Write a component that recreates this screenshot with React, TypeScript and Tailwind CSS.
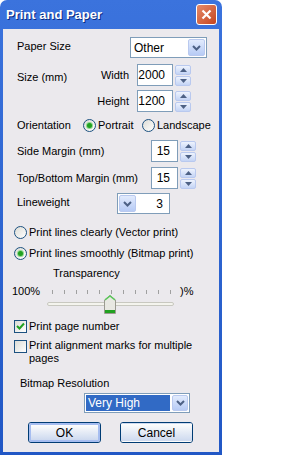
import React from 'react';

const font = { fontFamily: '"Liberation Sans", Arial, sans-serif' };

function Arrow({ up }: { up?: boolean }) {
  return (
    <svg width="7" height="4" viewBox="0 0 7 4">
      <path d={up ? 'M0 4 L3.5 0 L7 4 Z' : 'M0 0 L3.5 4 L7 0 Z'} fill="#4d6185" />
    </svg>
  );
}

function Chevron() {
  return (
    <svg width="9" height="6" viewBox="0 0 9 6">
      <path d="M1 1 L4.5 4.5 L8 1" stroke="#4d6185" strokeWidth="2" fill="none" />
    </svg>
  );
}

function DropButton({ className = '' }: { className?: string }) {
  return (
    <div className={`flex items-center justify-center rounded-[2px] border border-[#b9c9ef] bg-gradient-to-b from-[#e2ebfd] to-[#b7cbf5] ${className}`}>
      <Chevron />
    </div>
  );
}

function Spin({ value, w }: { value: string; w: string }) {
  return (
    <div className="flex items-center gap-[2px]">
      <div className={`${w} h-[22px] border border-[#7f9db9] bg-white flex items-center justify-end pr-[7px] text-[12px] text-black`}>
        {value}
      </div>
      <div className="flex flex-col gap-[1px]">
        <div className="w-[16px] h-[10px] rounded-[2px] border border-[#b9c9ef] bg-gradient-to-b from-[#eef3fd] to-[#c4d4f5] flex items-center justify-center">
          <Arrow up />
        </div>
        <div className="w-[16px] h-[10px] rounded-[2px] border border-[#b9c9ef] bg-gradient-to-b from-[#eef3fd] to-[#c4d4f5] flex items-center justify-center">
          <Arrow />
        </div>
      </div>
    </div>
  );
}

function Radio({ on }: { on?: boolean }) {
  return (
    <div className="w-[13px] h-[13px] rounded-full border border-[#1c5180] bg-gradient-to-br from-[#dcdcd6] to-white flex items-center justify-center shrink-0">
      {on && <div className="w-[5px] h-[5px] rounded-full bg-[#21a121] shadow-[0_0_0_1px_#8fd88f]" />}
    </div>
  );
}

function Check({ on }: { on?: boolean }) {
  return (
    <div className="w-[13px] h-[13px] border border-[#1c5180] bg-gradient-to-br from-[#dcdcd6] to-white flex items-center justify-center shrink-0">
      {on && (
        <svg width="9" height="9" viewBox="0 0 9 9">
          <path d="M1 4 L3.5 6.5 L8 1.5" stroke="#21a121" strokeWidth="2" fill="none" />
        </svg>
      )}
    </div>
  );
}

function Button({ label, primary }: { label: string; primary?: boolean }) {
  return (
    <div className="w-[73px] h-[21px] rounded-[3px] border border-[#003c74] bg-gradient-to-b from-white via-[#f0f0ea] to-[#d6d0c5] p-0">
      <div className={`w-full h-full rounded-[2px] flex items-center justify-center text-[12px] text-black ${primary ? 'border-2 border-[#a6bdf0]' : 'border border-transparent'} bg-gradient-to-b from-[#fdfdfc] to-[#cdd9ef]`}>
        {label}
      </div>
    </div>
  );
}

function Slider() {
  const ticks = Array.from({ length: 11 }, (_, i) => i);
  return (
    <div className="flex flex-col">
      <div className="flex items-center h-[14px] mt-[4px]">
        <span className="w-[38px] pl-[9px]">100%</span>
        <div className="flex gap-[10.8px] ml-[11px] mt-[1px]">
          {ticks.map((t) => (
            <div key={t} className="w-px h-[4px] bg-[#a0a0a0]" />
          ))}
        </div>
        <span className="ml-[9px]">)%</span>
      </div>
      <div className="relative h-[20px] ml-[44px] w-[127px] -mt-[3px]">
        <div className="absolute left-0 right-0 top-[7px] h-[4px] rounded-[2px] border border-[#c8c8c0] bg-[#f4f4ee]" />
        <svg className="absolute left-[57px] top-0" width="12" height="19" viewBox="0 0 12 19">
          <path d="M0.5 5 L6 0.5 L11.5 5 L11.5 18.5 L0.5 18.5 Z" fill="#e8e8e2" stroke="#9a9a90" />
          <path d="M1 5 L6 1 L11 5" stroke="#5ac85a" strokeWidth="1.5" fill="none" />
          <rect x="1" y="15" width="10" height="3" fill="#21a121" />
        </svg>
      </div>
    </div>
  );
}

export default function App() {
  return (
    <div className="w-[295px] h-[455px] bg-white" style={font}>
      <div className="w-[222px] h-[455px] flex flex-col rounded-t-[7px] bg-gradient-to-b from-[#3b73dd] to-[#2157c5]">
        {/* title bar */}
        <div className="h-[29px] flex items-center justify-between pl-[6px] pr-[5px]">
          <span className="text-white font-bold text-[13px] [text-shadow:1px_1px_0_#0a2a80]">Print and Paper</span>
          <div className="w-[21px] h-[21px] rounded-[3px] border border-white bg-gradient-to-br from-[#e48a68] to-[#c5431c] flex items-center justify-center">
            <svg width="11" height="11" viewBox="0 0 11 11">
              <path d="M1.5 1.5 L9.5 9.5 M9.5 1.5 L1.5 9.5" stroke="white" strokeWidth="2.2" />
            </svg>
          </div>
        </div>
        {/* body */}
        <div className="flex-1 mx-[3px] mb-[3px] bg-[#ebe9ed] text-[11px] text-black flex flex-col">
          <div className="flex items-center justify-between h-[21px] mt-[8px] pl-[14px] pr-[12px]">
            <span className="-mt-[3px]">Paper Size</span>
            <div className="w-[77px] h-[21px] border border-[#7f9db9] bg-white flex items-center justify-between pl-[3px] pr-[1px] text-[12px]">
              <span>Other</span>
              <DropButton className="w-[17px] h-[17px]" />
            </div>
          </div>
          <div className="flex mt-[6px]">
            <span className="pl-[14px] w-[90px] self-start mt-[5px]">Size (mm)</span>
            <div className="flex flex-col gap-[4px]">
              <div className="flex items-center">
                <span className="w-[44px] text-right pr-[8px]">Width</span>
                <Spin value="2000" w="w-[36px]" />
              </div>
              <div className="flex items-center">
                <span className="w-[44px] text-right pr-[8px]">Height</span>
                <Spin value="1200" w="w-[36px]" />
              </div>
            </div>
          </div>
          <div className="flex items-center h-[16px] mt-[5px] pl-[14px]">
            <span className="w-[66px]">Orientation</span>
            <Radio on />
            <span className="ml-[2px] w-[44px]">Portrait</span>
            <Radio />
            <span className="ml-[2px]">Landscape</span>
          </div>
          <div className="flex items-center justify-between h-[22px] mt-[7px] pl-[14px] pr-[23px]">
            <span>Side Margin (mm)</span>
            <Spin value="15" w="w-[27px]" />
          </div>
          <div className="flex items-center justify-between h-[22px] mt-[5px] pl-[14px] pr-[23px]">
            <span>Top/Bottom Margin (mm)</span>
            <Spin value="15" w="w-[27px]" />
          </div>
          <div className="flex items-center h-[21px] mt-[4px] pl-[14px]">
            <span className="w-[100px] -mt-[2px]">Lineweight</span>
            <div className="w-[53px] h-[21px] border border-[#7f9db9] bg-white flex items-center justify-between pl-px pr-[6px] text-[12px]">
              <DropButton className="w-[17px] h-[17px]" />
              <span>3</span>
            </div>
          </div>
          <div className="flex items-center h-[16px] mt-[10px] pl-[11px] gap-[2px]">
            <Radio />
            <span>Print lines clearly (Vector print)</span>
          </div>
          <div className="flex items-center h-[16px] mt-[5px] pl-[11px] gap-[2px]">
            <Radio on />
            <span>Print lines smoothly (Bitmap print)</span>
          </div>
          <div className="h-[14px] mt-[5px] pl-[50px] flex items-center">Transparency</div>
          <Slider />
          <div className="flex items-center h-[16px] mt-[3px] pl-[11px] gap-[2px]">
            <Check on />
            <span>Print page number</span>
          </div>
          <div className="flex items-start mt-[6px] pl-[11px] gap-[2px]">
            <Check />
            <span className="leading-[13px] w-[165px] -mt-[1px]">Print alignment marks for multiple pages</span>
          </div>
          <div className="h-[14px] mt-[11px] pl-[17px] flex items-center">Bitmap Resolution</div>
          <div className="flex mt-[3px] pl-[81px]">
            <div className="w-[106px] h-[20px] border border-[#7f9db9] bg-white flex items-center justify-between p-px text-[12px]">
              <span className="flex-1 h-full bg-[#316ac5] text-white flex items-center pl-[2px] mr-[2px]">Very High</span>
              <DropButton className="w-[16px] h-[16px]" />
            </div>
          </div>
          <div className="flex mt-[9px] pl-[25px] gap-[19px]">
            <Button label="OK" primary />
            <Button label="Cancel" />
          </div>
        </div>
      </div>
    </div>
  );
}
